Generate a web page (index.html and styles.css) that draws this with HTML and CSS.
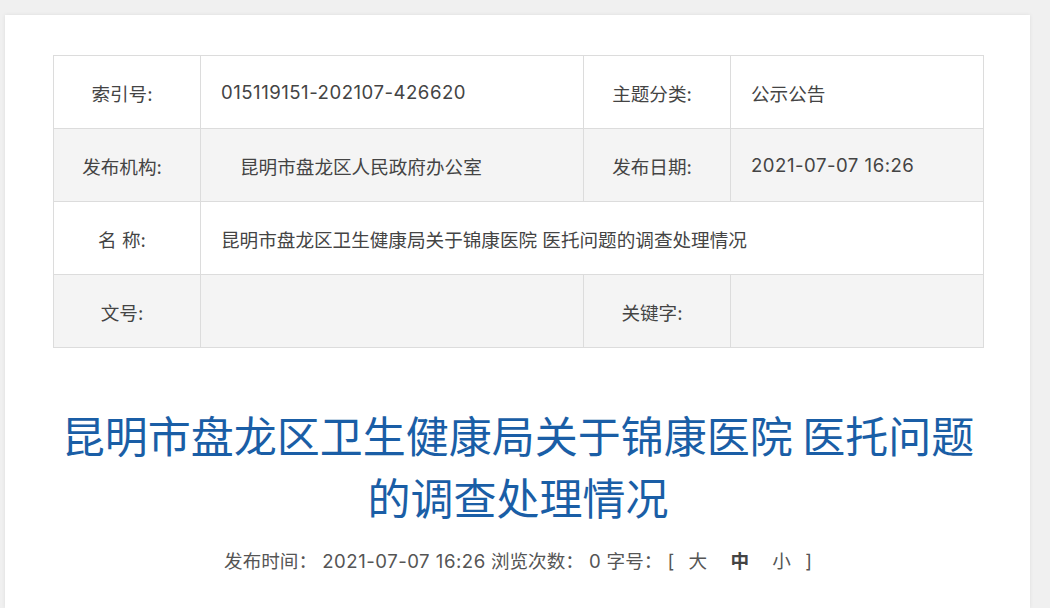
FILE: index.html
```html
<!DOCTYPE html>
<html lang="zh-CN">
<head>
<meta charset="utf-8">
<title>昆明市盘龙区卫生健康局关于锦康医院 医托问题的调查处理情况</title>
<link rel="stylesheet" href="styles.css">
</head>
<body>
<div class="card">
  <table class="info">
    <colgroup>
      <col class="c1"><col class="c2"><col class="c3"><col class="c4">
    </colgroup>
    <tr>
      <td class="lab">索引号:</td>
      <td class="val"><span class="num">015119151-202107-426620</span></td>
      <td class="lab">主题分类:</td>
      <td class="val">公示公告</td>
    </tr>
    <tr class="alt">
      <td class="lab">发布机构:</td>
      <td class="val indent">昆明市盘龙区人民政府办公室</td>
      <td class="lab">发布日期:</td>
      <td class="val"><span class="num">2021-07-07 16:26</span></td>
    </tr>
    <tr>
      <td class="lab">名 称:</td>
      <td class="val" colspan="3">昆明市盘龙区卫生健康局关于锦康医院 医托问题的调查处理情况</td>
    </tr>
    <tr class="alt">
      <td class="lab">文号:</td>
      <td class="val"></td>
      <td class="lab">关键字:</td>
      <td class="val"></td>
    </tr>
  </table>
  <h1 class="title">昆明市盘龙区卫生健康局关于锦康医院 医托问题的调查处理情况</h1>
  <div class="meta">发布时间： <span class="num">2021-07-07 16:26</span> 浏览次数： <span class="num">0</span> 字号： [ <span class="sz">大</span> <span class="sz cur">中</span> <span class="sz">小</span> ]</div>
</div>
</body>
</html>
```
FILE: styles.css
```css
html, body {
  margin: 0;
  padding: 0;
}
body {
  background: #f0f0f0;
  font-family: "Inter", "Noto Sans CJK SC", sans-serif;
  color: #333;
  padding: 15px 20px 0 5px;
  height: 608px;
  box-sizing: border-box;
  overflow: hidden;
}
.card {
  background: #fff;
  box-shadow: 0 0 4px rgba(0, 0, 0, 0.08);
  padding: 40px 47px 40px 48px;
  height: 100%;
  box-sizing: border-box;
}
.num {
  letter-spacing: 0.5px;
}
.info {
  width: 930px;
  border-collapse: collapse;
  table-layout: fixed;
  font-size: 18.6px;
  color: #444;
}
.info .c1 { width: 147px; }
.info .c2 { width: 383px; }
.info .c3 { width: 147px; }
.info .c4 { width: 253px; }
.info td {
  border: 1px solid #dcdcdc;
  height: 73px;
  padding: 0;
  box-sizing: border-box;
}
.info tr.alt td {
  background: #f4f4f4;
}
.info td.lab {
  text-align: center;
  padding-right: 10px;
}
.info td.val {
  padding-left: 20px;
}
.info td.val.indent {
  padding-left: 39px;
}
.title {
  margin: 55px 0 0;
  font-family: "Noto Sans CJK SC", sans-serif;
  font-size: 43px;
  line-height: 62px;
  font-weight: normal;
  color: #1a5ea6;
  text-align: center;
}
.meta {
  margin-top: 19px;
  text-align: center;
  font-size: 18.6px;
  color: #555;
}
.sz {
  margin: 0 9px;
}
.sz.cur {
  font-weight: bold;
  color: #444;
}
```
